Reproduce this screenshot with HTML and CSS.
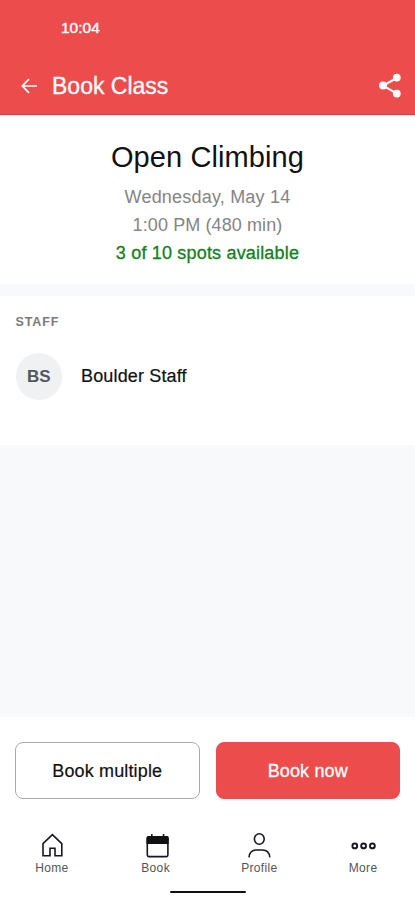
FILE: index.html
```html
<!DOCTYPE html>
<html lang="en">
<head>
  <meta charset="UTF-8">
  <meta name="viewport" content="width=device-width, initial-scale=1.0">
  <title>Book Class</title>
  <link rel="stylesheet" href="styles.css">
</head>
<body>
  <header class="header">
    <div class="time">10:04</div>
    <div class="title-bar">
      <svg class="back" width="18" height="18" viewBox="0 0 18 18">
        <path d="M17 9H2.500M9 2.200L2.300 9l6.700 6.800" />
      </svg>
      <h1 class="page-title">Book Class</h1>
      <svg class="share" width="24" height="26" viewBox="0 0 24 26">
        <path d="M19 5L5 12.600l14 8" />
        <circle cx="5" cy="12.500" r="3.900" />
        <circle cx="18.800" cy="4.600" r="3.900" />
        <circle cx="18.800" cy="20.600" r="3.900" />
      </svg>
    </div>
  </header>

  <main class="content">
    <section class="class-info">
      <h2 class="class-name">Open Climbing</h2>
      <p class="date">Wednesday, May 14</p>
      <p class="hours">1:00 PM (480 min)</p>
      <p class="spots">3 of 10 spots available</p>
    </section>

    <section class="staff">
      <h3 class="staff-heading">STAFF</h3>
      <div class="staff-row">
        <div class="avatar">BS</div>
        <span class="staff-name">Boulder Staff</span>
      </div>
    </section>
  </main>

  <footer class="footer">
    <div class="actions">
      <button class="btn btn-outline">Book multiple</button>
      <button class="btn btn-primary">Book now</button>
    </div>
    <nav class="nav">
      <a class="nav-item">
        <svg width="26" height="26" viewBox="0 0 26 26">
          <path d="M4 11.600L13.400 2.600l9.400 9v12.200H16v-7.600h-5v7.600H4z" />
        </svg>
        <span>Home</span>
      </a>
      <a class="nav-item">
        <svg width="26" height="26" viewBox="0 0 26 26">
          <rect x="4.300" y="4.800" width="20.600" height="19.800" rx="1.500" />
          <path class="solid" d="M3.500 6q0-2 2-2h18.200q2 0 2 2v6H3.500z" />
          <path d="M8.800 2v3M20.600 2v3" />
        </svg>
        <span>Book</span>
      </a>
      <a class="nav-item">
        <svg width="26" height="26" viewBox="0 0 26 26">
          <ellipse cx="13.300" cy="7" rx="4.900" ry="5.300" />
          <path d="M3 25.400c.4-4.800 3.400-7.400 7.400-7.400h6c4 0 7 2.600 7.400 7.400" />
        </svg>
        <span>Profile</span>
      </a>
      <a class="nav-item">
        <svg class="dots" width="26" height="26" viewBox="0 0 26 26">
          <circle cx="4.800" cy="13.900" r="2.400" />
          <circle cx="13.600" cy="13.900" r="2.400" />
          <circle cx="22.400" cy="13.900" r="2.400" />
        </svg>
        <span>More</span>
      </a>
    </nav>
    <div class="home-bar"></div>
  </footer>
</body>
</html>
```

FILE: styles.css
```css
:root {
  --red: #ed4c4c;
  --page: #f7f9fb;
}

* {
  box-sizing: border-box;
}

body {
  margin: 0;
  height: 100vh;
  display: flex;
  flex-direction: column;
  background: var(--page);
  color: #111;
  font-family: "Liberation Sans", Arial, sans-serif;
}

h1, h2, h3, p {
  margin: 0;
  font-weight: normal;
}

.header {
  height: 115px;
  background: var(--red);
  border-bottom: 1px solid #dc3e3a;
  color: #fff;
}

.time {
  padding: 18px 0 0 61px;
  font-size: 15.5px;
  line-height: 20px;
  -webkit-text-stroke: 0.4px;
}

.title-bar {
  display: flex;
  align-items: center;
  height: 32px;
  margin-top: 32px;
  padding: 0 13px 0 20px;
}

.back, .share {
  fill: none;
  stroke: #fff;
  stroke-width: 1.7;
}

.share {
  margin-left: auto;
  stroke-width: 2.2;
}

.share circle {
  fill: #fff;
  stroke: none;
}

.page-title {
  margin-left: 14px;
  font-size: 23px;
  line-height: 30px;
  -webkit-text-stroke: 0.3px;
}

.content {
  flex: 1;
}

.class-info {
  height: 169px;
  padding-top: 24px;
  background: #fff;
  text-align: center;
}

.class-name {
  margin-bottom: 8px;
  font-size: 29px;
  line-height: 36px;
  letter-spacing: 0.1px;
}

.date, .hours, .spots {
  font-size: 18px;
  line-height: 28px;
  color: #858585;
}

.date {
  letter-spacing: 0.2px;
}

.hours {
  letter-spacing: 0.1px;
}

.spots {
  color: #138020;
  letter-spacing: 0.18px;
  -webkit-text-stroke: 0.3px;
}

.staff {
  height: 149px;
  margin-top: 12px;
  padding: 18px 15.5px 0;
  background: #fff;
}

.staff-heading {
  font-size: 12.5px;
  font-weight: bold;
  line-height: 16px;
  letter-spacing: 0.9px;
  color: #7a7a7a;
}

.staff-row {
  display: flex;
  align-items: center;
  gap: 19px;
  margin-top: 23px;
}

.avatar {
  width: 46.5px;
  height: 46.5px;
  border-radius: 50%;
  background: #eff1f3;
  color: #505761;
  font-size: 17px;
  font-weight: bold;
  line-height: 47px;
  text-align: center;
}

.staff-name {
  font-size: 18px;
  letter-spacing: 0.15px;
  -webkit-text-stroke: 0.2px;
}

.footer {
  height: 183px;
  background: #fff;
}

.actions {
  display: flex;
  gap: 16px;
  padding: 25px 15px 0;
}

.btn {
  flex: 1;
  height: 57px;
  padding: 2px 0 0;
  border: 1px solid #aaa;
  border-radius: 8px;
  background: #fff;
  color: #111;
  font-family: inherit;
  font-size: 18px;
  letter-spacing: 0.15px;
  -webkit-text-stroke: 0.2px;
}

.btn-primary {
  border-color: var(--red);
  background: var(--red);
  color: #fff;
  -webkit-text-stroke: 0.3px;
}

.nav {
  display: flex;
  margin-top: 33px;
}

.nav-item {
  flex: 1;
  display: flex;
  flex-direction: column;
  align-items: center;
  font-size: 12px;
  line-height: 16px;
  letter-spacing: 0.35px;
  color: #555;
}

.nav-item svg {
  margin-bottom: 2px;
  fill: none;
  stroke: #171722;
  stroke-width: 1.6;
}

.nav-item .dots {
  stroke-width: 1.9;
}

.nav-item .solid {
  fill: #111;
  stroke: none;
}

.home-bar {
  width: 76px;
  height: 2px;
  margin: 15px auto 0;
  border-radius: 1px;
  background: #111;
}
```
